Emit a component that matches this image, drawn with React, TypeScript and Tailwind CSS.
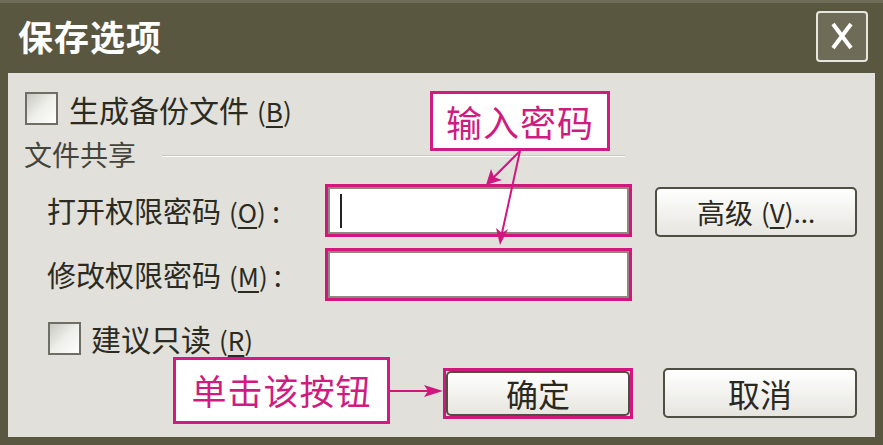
const CJK = { fontFamily: '"Noto Sans CJK SC", "Liberation Sans", sans-serif' };

function Checkbox() {
  return (
    <div className="w-[33px] h-[33px] border-2 border-[#6e6e64] bg-gradient-to-br from-[#c9c9c2] via-[#eeeeea] to-white" />
  );
}

function Mnemonic({ k }: { k: string }) {
  return (
    <span className="text-[26px] ml-[8px]">
      (<span className="underline underline-offset-4">{k}</span>)
    </span>
  );
}

function PasswordInput({ caret }: { caret?: boolean }) {
  return (
    <div className="w-[307px] h-[53px] border-[3px] border-[#d0177f] bg-[#d0177f]">
      <div className="w-full h-full border-2 border-[#8d8982] bg-white flex items-center pl-[10px]">
        {caret && <div className="w-[2px] h-[34px] bg-[#222]" />}
      </div>
    </div>
  );
}

function Button({ children, className }: { children: React.ReactNode; className?: string }) {
  return (
    <div
      className={`h-[50px] rounded-[5px] border-2 border-[#4f4e42] bg-gradient-to-b from-white to-[#e6e5df] flex items-center justify-center text-[#2a2920] ${className ?? ''}`}
    >
      {children}
    </div>
  );
}

export default function App() {
  return (
    <div className="w-[883px] h-[445px] bg-[#5a5741] flex flex-col" style={CJK}>
      <div className="h-[73px] flex items-center justify-between pl-[18px] pr-[15px] pb-[4px] border-t-[3px] border-[#6f6c58]">
        <span className="text-[35px] font-bold text-white tracking-[1px]">保存选项</span>
        <div className="w-[52px] h-[51px] rounded-[4px] border-2 border-[#e6e6de] bg-[#6e6b57] flex items-center justify-center">
          <svg width="30" height="32" viewBox="0 0 30 32">
            <path d="M6 4 L24 28 M24 4 L6 28" stroke="white" strokeWidth="4" />
          </svg>
        </div>
      </div>

      <div className="relative flex-1 mx-[8px] mb-[8px] bg-[#e1e0db] text-[#2c2b22] flex flex-col">
        <div className="flex items-center gap-[11px] pl-[17px] pt-[19px] h-[52px] text-[30px] leading-none">
          <Checkbox />
          <span>
            生成备份文件
            <Mnemonic k="B" />
          </span>
        </div>

        <div className="flex items-center pl-[16px] mt-[14px] h-[30px] text-[28px] leading-none text-[#45443a]">
          <span>文件共享</span>
          <div className="ml-[26px] mt-[4px] w-[463px] h-[2px] bg-[#c8c7c0] border-b border-white" />
        </div>

        <div className="flex items-center mt-[15px] h-[53px] text-[29px] leading-none">
          <span className="pl-[39px] w-[317px]">
            打开权限密码
            <Mnemonic k="O" />
            <span className="ml-[6px]">:</span>
          </span>
          <PasswordInput caret />
          <Button className="ml-[23px] w-[202px] text-[28px] mt-[2px]">
            高级<span className="ml-[8px] text-[26px]">(<span className="underline underline-offset-4">V</span>)...</span>
          </Button>
        </div>

        <div className="flex items-center mt-[11px] h-[53px] text-[29px] leading-none">
          <span className="pl-[39px] w-[317px]">
            修改权限密码
            <Mnemonic k="M" />
            <span className="ml-[6px]">:</span>
          </span>
          <PasswordInput />
        </div>

        <div className="flex items-center gap-[10px] pl-[40px] mt-[20px] h-[34px] text-[30px] leading-none">
          <Checkbox />
          <span>
            建议只读
            <Mnemonic k="R" />
          </span>
        </div>

        <div className="flex items-center mt-[2px] h-[67px]">
          <div className="ml-[165px] w-[217px] h-[67px] border-[3px] border-[#cf1c80] bg-white flex items-center justify-center text-[35px] text-[#cf1c80] tracking-[1px]">
            单击该按钮
          </div>
          <svg width="53" height="20" viewBox="0 0 53 20" className="shrink-0">
            <line x1="0" y1="10" x2="40" y2="10" stroke="#d0177f" strokeWidth="2" />
            <path d="M53 10 L34 4 L38 10 L34 16 Z" fill="#d0177f" />
          </svg>
          <div className="w-[190px] h-[51px] border-[3px] border-[#d0177f] mt-[5px]">
            <Button className="w-full h-full text-[32px] rounded-[2px]">确定</Button>
          </div>
          <Button className="ml-[30px] w-[194px] text-[32px] mt-[5px]">取消</Button>
        </div>

        <div className="absolute left-[422px] top-[18px] w-[180px] h-[60px] border-[3px] border-[#cf1c80] bg-white flex items-center justify-center text-[36px] text-[#cf1c80] tracking-[1px]">
          输入密码
        </div>

        <svg className="absolute left-0 top-0 pointer-events-none" width="867" height="364" viewBox="0 0 867 364">
          <line x1="512" y1="78" x2="484" y2="106" stroke="#d0177f" strokeWidth="2" />
          <path d="M478 112 L483 96 L486 104 L494 107 Z" fill="#d0177f" />
          <line x1="512" y1="78" x2="494" y2="160" stroke="#d0177f" strokeWidth="2" />
          <path d="M492 172 L488 155 L494 160 L500 156 Z" fill="#d0177f" />
        </svg>
      </div>
    </div>
  );
}
